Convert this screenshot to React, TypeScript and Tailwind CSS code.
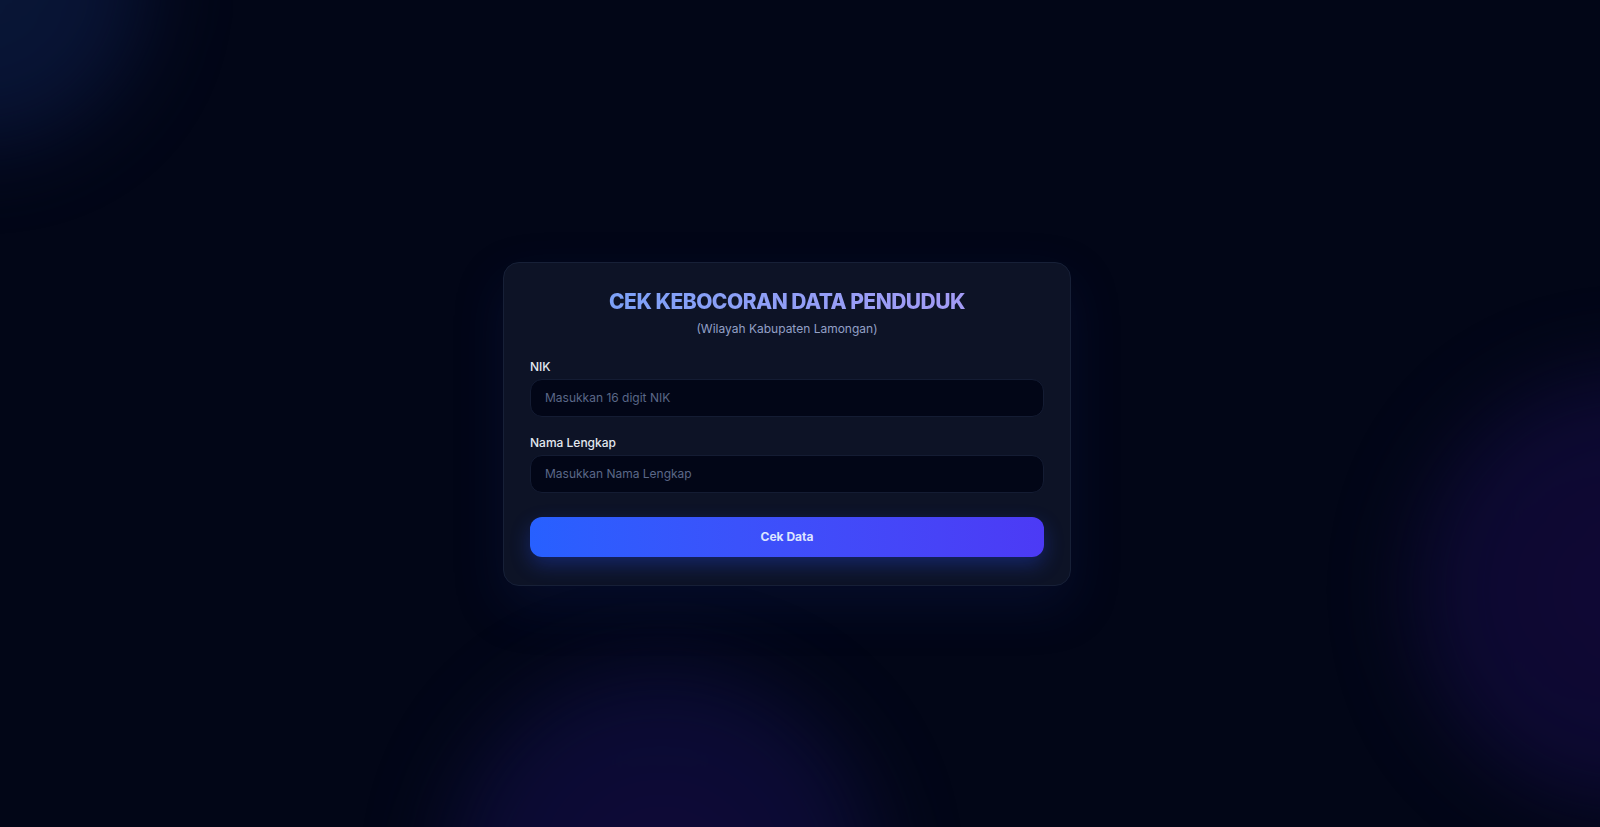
import { useState } from "react";

export default function App() {
  const [nik, setNik] = useState("");
  const [nama, setNama] = useState("");

  const handleSubmit = (e: React.FormEvent) => {
    e.preventDefault();
  };

  return (
    <div className="min-h-screen w-full flex items-center justify-center pr-[26px] pt-[20px] bg-[#020617] relative overflow-hidden font-['Inter',sans-serif]">
      {/* Glow blobs */}
      <div className="absolute inset-0 pointer-events-none">
        <div className="absolute -top-[190px] -left-[190px] w-[340px] h-[340px] rounded-full bg-[radial-gradient(circle,#0b1c40_0%,#0a163a_60%,#070d2e_100%)] opacity-80 blur-2xl"></div>
        <div className="absolute top-[370px] -right-[252px] w-[440px] h-[440px] rounded-full bg-[radial-gradient(circle,#13083a_0%,#0e0a34_55%,#080a2a_100%)] opacity-90 blur-2xl"></div>
        <div className="absolute -bottom-[272px] left-[444px] w-[436px] h-[436px] rounded-full bg-[radial-gradient(circle,#130a3e_0%,#0c0c36_55%,#070a2a_100%)] opacity-90 blur-2xl"></div>
      </div>

      <div className="w-[568px] bg-[#0d1326] border border-[#172037] rounded-2xl px-[26px] pt-[26px] pb-7 relative z-10 shadow-[0_20px_50px_rgba(25,35,110,0.22)]">
        <h1 className="text-center text-[21px] leading-[26px] font-extrabold tracking-tight bg-gradient-to-r from-[#72a2f8] to-[#ab9af5] bg-clip-text text-transparent">
          CEK KEBOCORAN DATA PENDUDUK
        </h1>
        <p className="text-center text-[12px] leading-5 mt-1 text-[#93a0c6]">
          (Wilayah Kabupaten Lamongan)
        </p>

        <form onSubmit={handleSubmit} className="mt-[18px] flex flex-col">
          <label className="block text-[12px] leading-5 font-medium text-[#e2e8f0] mb-0.5">NIK</label>
          <input
            type="text"
            value={nik}
            onChange={(e) => setNik(e.target.value)}
            placeholder="Masukkan 16 digit NIK"
            className="w-full h-[38px] px-3.5 rounded-xl bg-[#020617] border border-[#141c33] text-[12px] text-slate-200 placeholder:text-[#5b6888] outline-none"
          />

          <label className="block text-[12px] leading-5 font-medium text-[#e2e8f0] mt-4 mb-0.5">Nama Lengkap</label>
          <input
            type="text"
            value={nama}
            onChange={(e) => setNama(e.target.value)}
            placeholder="Masukkan Nama Lengkap"
            className="w-full h-[38px] px-3.5 rounded-xl bg-[#020617] border border-[#141c33] text-[12px] text-slate-200 placeholder:text-[#5b6888] outline-none"
          />

          <button
            type="submit"
            className="w-full h-10 mt-6 rounded-xl bg-gradient-to-r from-[#2760ff] to-[#4c3af5] text-[12px] font-bold text-[#dde5ff] shadow-[0_8px_20px_rgba(40,80,255,0.3)]"
          >
            Cek Data
          </button>
        </form>
      </div>
    </div>
  );
}
